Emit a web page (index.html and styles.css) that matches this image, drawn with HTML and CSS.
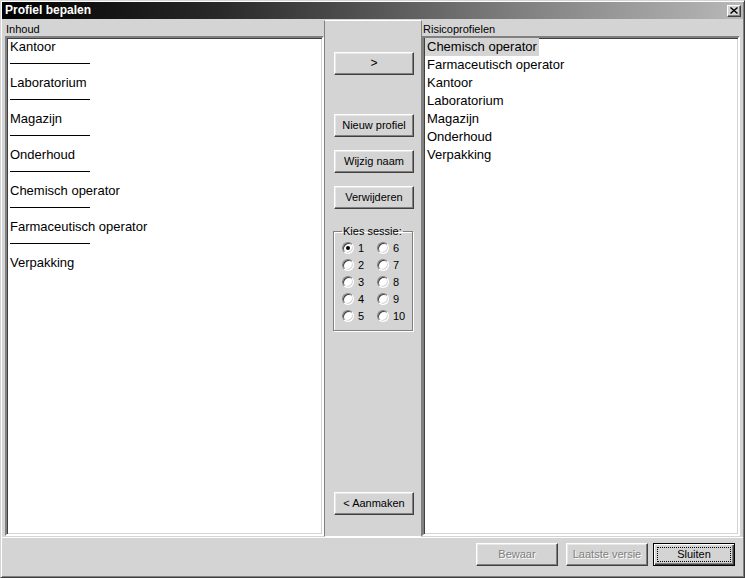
FILE: index.html
```html
<!DOCTYPE html>
<html>
<head>
<meta charset="utf-8">
<link rel="stylesheet" href="styles.css">
</head>
<body>
<div class="window">
  <div class="titlebar">
    <span class="title">Profiel bepalen</span>
    <span class="closebtn"><svg width="8" height="7" viewBox="0 0 8 7"><path d="M0.5 0.5 L7.5 6.5 M7.5 0.5 L0.5 6.5" stroke="#000" stroke-width="1.4" fill="none"/></svg></span>
  </div>
  <div class="main">
    <div class="col left">
      <div class="label">Inhoud</div>
      <div class="listbox">
        <div class="item"><span>Kantoor</span></div>
        <div class="sep"></div>
        <div class="item"><span>Laboratorium</span></div>
        <div class="sep"></div>
        <div class="item"><span>Magazijn</span></div>
        <div class="sep"></div>
        <div class="item"><span>Onderhoud</span></div>
        <div class="sep"></div>
        <div class="item"><span>Chemisch operator</span></div>
        <div class="sep"></div>
        <div class="item"><span>Farmaceutisch operator</span></div>
        <div class="sep"></div>
        <div class="item"><span>Verpakking</span></div>
      </div>
    </div>
    <div class="col mid">
      <button class="btn b-add">&gt;</button>
      <button class="btn b-new">Nieuw profiel</button>
      <button class="btn b-gap">Wijzig naam</button>
      <button class="btn b-gap">Verwijderen</button>
      <fieldset class="group">
        <legend>Kies sessie:</legend>
        <div class="radios">
          <label class="radio"><span class="dot checked"></span>1</label>
          <label class="radio"><span class="dot"></span>6</label>
          <label class="radio"><span class="dot"></span>2</label>
          <label class="radio"><span class="dot"></span>7</label>
          <label class="radio"><span class="dot"></span>3</label>
          <label class="radio"><span class="dot"></span>8</label>
          <label class="radio"><span class="dot"></span>4</label>
          <label class="radio"><span class="dot"></span>9</label>
          <label class="radio"><span class="dot"></span>5</label>
          <label class="radio"><span class="dot"></span>10</label>
        </div>
      </fieldset>
      <button class="btn b-make">&lt; Aanmaken</button>
    </div>
    <div class="col right">
      <div class="label">Risicoprofielen</div>
      <div class="listbox">
        <div class="item sel"><span>Chemisch operator</span></div>
        <div class="item"><span>Farmaceutisch operator</span></div>
        <div class="item"><span>Kantoor</span></div>
        <div class="item"><span>Laboratorium</span></div>
        <div class="item"><span>Magazijn</span></div>
        <div class="item"><span>Onderhoud</span></div>
        <div class="item"><span>Verpakking</span></div>
      </div>
    </div>
  </div>
  <div class="footer">
    <button class="btn fbtn disabled">Bewaar</button>
    <button class="btn fbtn disabled">Laatste versie</button>
    <button class="btn fbtn default"><span class="focus">Sluiten</span></button>
  </div>
</div>
</body>
</html>
```
FILE: styles.css
```css
html, body {
  margin: 0;
  padding: 0;
  background: #d4d4d4;
}
.window {
  width: 745px;
  height: 578px;
  box-sizing: border-box;
  background: #d4d4d4;
  border: 1px solid;
  border-color: #d4d4d4 #404040 #404040 #d4d4d4;
  box-shadow: inset 1px 1px #fff, inset -1px -1px #808080;
  padding: 1px 1px 1px 1px;
  display: flex;
  flex-direction: column;
  font-family: "Liberation Sans", Arial, sans-serif;
  color: #000;
}
.titlebar {
  height: 17px;
  background: linear-gradient(to right, #000 0%, #2a2a2a 30%, #808080 70%, #b8b8b8 100%);
  display: flex;
  align-items: center;
  justify-content: space-between;
}
.title {
  color: #fff;
  font-weight: bold;
  font-size: 12px;
  padding-left: 3px;
  line-height: 17px;
}
.closebtn {
  width: 14px;
  height: 12px;
  box-sizing: border-box;
  margin-right: 2px;
  background: #d4d4d4;
  border: 1px solid;
  border-color: #fff #404040 #404040 #fff;
  box-shadow: inset -1px -1px #808080;
  display: flex;
  align-items: center;
  justify-content: center;
}
.main {
  margin-top: 1px;
  height: 517px;
  display: flex;
  border-bottom: 1px solid #fff;
}
.col {
  display: flex;
  flex-direction: column;
  box-sizing: border-box;
}
.left {
  width: 322px;
}
.right {
  flex: 1;
}
.label {
  height: 16px;
  line-height: 18px;
  font-size: 11px;
  padding-left: 4px;
}
.right .label {
  padding-left: 1px;
}
.listbox {
  flex: 1;
  background: #fff;
  border: 2px solid;
  border-color: #808080 #fff #fff #808080;
  box-shadow: inset 1px 1px #404040, inset -1px -1px #d4d4d4;
  margin: 0 0 1px 3px;
  overflow: hidden;
}
.right .listbox {
  margin: 0 3px 1px 0;
}
.item {
  height: 18px;
  line-height: 18px;
  font-size: 13px;
  padding-left: 1px;
  white-space: nowrap;
}
.item span {
  display: inline-block;
  padding: 0 2px;
}
.item.sel span {
  background: #d4d4d4;
}
.sep {
  height: 18px;
  box-sizing: border-box;
  padding: 7px 0 0 3px;
}
.sep::after {
  content: "";
  display: block;
  width: 80px;
  border-top: 1px solid #000;
}
.mid {
  width: 98px;
  border: 1px solid;
  border-color: #fff #808080 #fff #808080;
  padding: 0 0 21px 9px;
}
.btn {
  width: 80px;
  height: 23px;
  box-sizing: border-box;
  background: #d4d4d4;
  border: 1px solid;
  border-color: #fff #404040 #404040 #fff;
  box-shadow: inset -1px -1px #808080, inset 1px 1px #e8e8e8;
  font-family: "Liberation Sans", Arial, sans-serif;
  font-size: 11px;
  color: #000;
  padding: 0;
  margin: 0;
  text-align: center;
  line-height: 19px;
}
.b-add {
  margin-top: 31px;
  font-size: 12px;
}
.b-new {
  margin-top: 39px;
}
.b-gap {
  margin-top: 13px;
}
.group {
  margin: 16px 0 0 -1px;
  width: 80px;
  height: 106px;
  box-sizing: border-box;
  border: 1px solid #808080;
  box-shadow: 1px 1px #fff, inset 1px 1px #fff;
  padding: 2px 0 0 8px;
  font-size: 11px;
}
.group legend {
  padding: 0 1px;
  margin-left: 0;
  font-size: 11px;
  line-height: 12px;
}
.radios {
  display: grid;
  grid-template-columns: 35px 35px;
  grid-auto-rows: 17px;
}
.radio {
  display: flex;
  align-items: center;
  font-size: 11px;
}
.dot {
  width: 12px;
  height: 12px;
  box-sizing: border-box;
  border-radius: 50%;
  background: #fff;
  border: 1px solid;
  border-color: #808080 #fff #fff #808080;
  box-shadow: inset 1px 1px #404040, inset -1px -1px #d4d4d4;
  margin-right: 4px;
  display: flex;
  align-items: center;
  justify-content: center;
}
.dot.checked::after {
  content: "";
  width: 4px;
  height: 4px;
  border-radius: 50%;
  background: #000;
}
.b-make {
  margin-top: auto;
}
.footer {
  flex: 1;
  display: flex;
  justify-content: flex-end;
  align-items: flex-start;
  padding: 5px 8px 0 0;
  gap: 8px;
}
.fbtn {
  width: 82px;
}
.fbtn.disabled {
  color: #808080;
  text-shadow: 1px 1px #fff;
}
.fbtn.default {
  margin-left: -3px;
  border: 1px solid #000;
  box-shadow: inset 1px 1px #fff, inset -1px -1px #404040, inset -2px -2px #808080;
  display: flex;
  padding: 3px;
}
.focus {
  flex: 1;
  border: 1px dotted #000;
  line-height: 13px;
}
```
